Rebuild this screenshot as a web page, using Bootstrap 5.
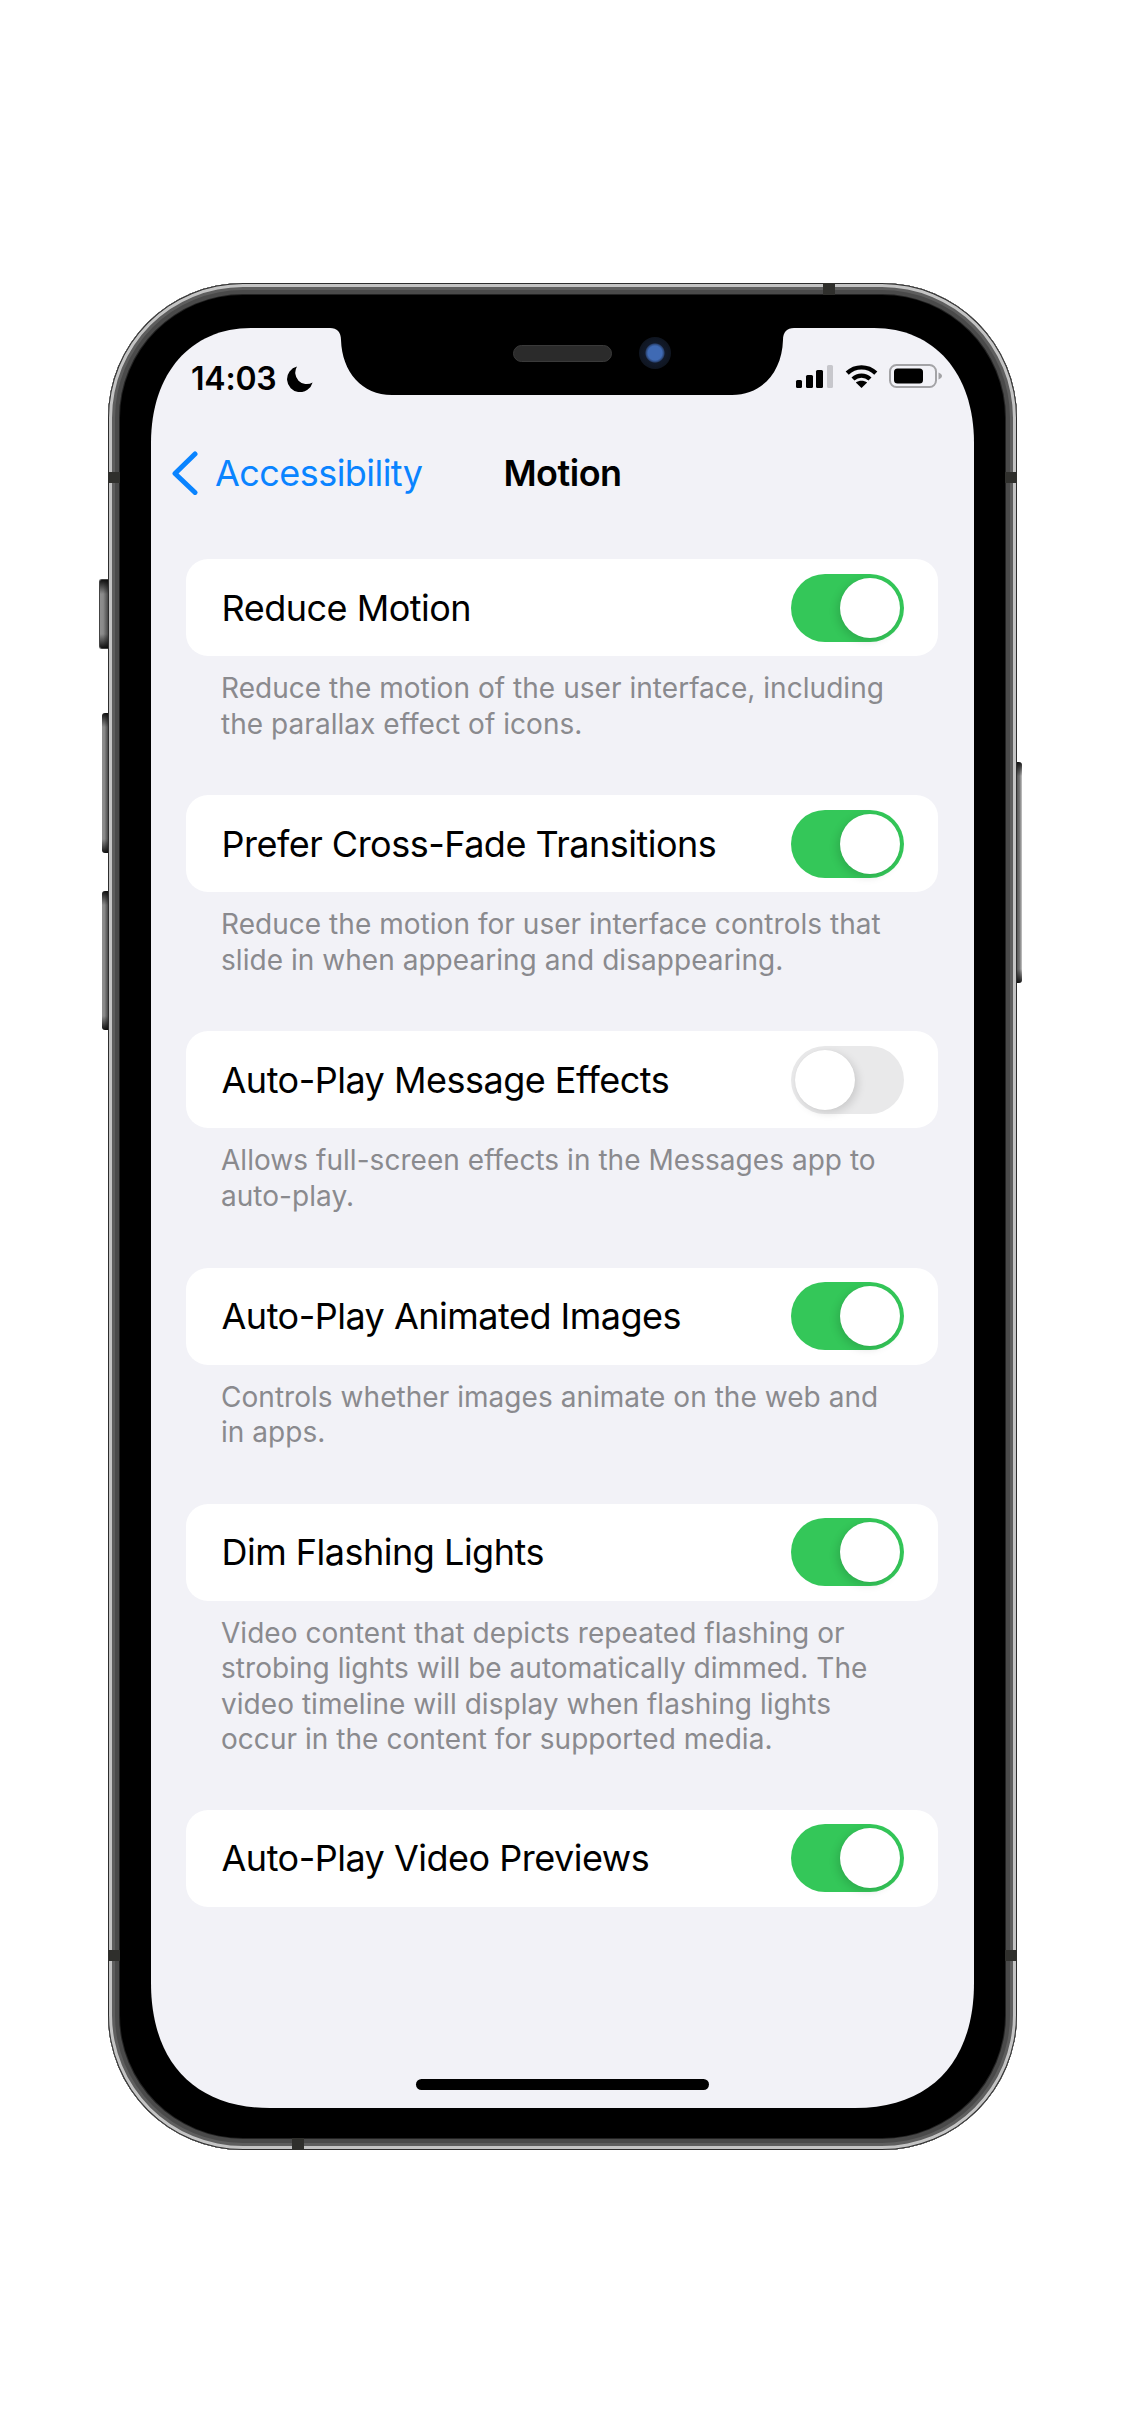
<!DOCTYPE html>
<html lang="en">
<head>
<meta charset="utf-8">
<title>Motion</title>
<link href="https://cdn.jsdelivr.net/npm/bootstrap@5.3.0/dist/css/bootstrap.min.css" rel="stylesheet">
<style>
html, body { background: #fff; }
body { width: 1125px; height: 2436px; padding: 283px 0 0 108px; font-family: Inter, "Liberation Sans", sans-serif; color: #000; overflow: hidden; }
.phone-body { width: 909px; height: 1867px; border-radius: 135px; background: #000; padding: 45px 43px 42px; box-shadow: inset 0 0 0 1px #2e2e2e, inset 0 0 0 4px #c4c4c4, inset 0 0 0 7px #5e5e5e, inset 0 0 0 11px #4a4a4a, inset 0 0 0 12px #222; }
.side-key { position: absolute; background: linear-gradient(180deg, rgba(10,10,10,.95), rgba(10,10,10,0) 14px, rgba(10,10,10,0) calc(100% - 14px), rgba(10,10,10,.95)), linear-gradient(90deg, #8f8f8f, #8a8a8a 40%, #4a4a4a); }
.key-silent { left: -9px; top: 296px; width: 9px; height: 70px; border-radius: 3px 0 0 3px; border: 1px solid #444; border-right: 0; }
.key-up { left: -6px; top: 430px; width: 6px; height: 140px; border-radius: 3px 0 0 3px; }
.key-down { left: -6px; top: 608px; width: 6px; height: 139px; border-radius: 3px 0 0 3px; }
.key-power { right: -5px; top: 479px; width: 5px; height: 221px; border-radius: 0 3px 3px 0; background: linear-gradient(180deg, rgba(10,10,10,.9), rgba(10,10,10,0) 14px, rgba(10,10,10,0) calc(100% - 14px), rgba(10,10,10,.9)), linear-gradient(270deg, #c9c9c9, #777 45%, #555); }
.band { position: absolute; background: #2f2f2c; }
.band-v { width: 12px; height: 11px; }
.band-h { width: 12px; height: 12px; }
.band-a { left: 0; top: 189px; } .band-b { right: 0; top: 189px; }
.band-c { left: 0; top: 1667px; } .band-d { right: 0; top: 1667px; }
.band-e { left: 715px; top: 0; } .band-f { left: 184px; bottom: 0; }
.screen-area { width: 823px; height: 1780px; background: #f2f2f7; overflow: hidden; clip-path: path("M0 115C0 45 40 0 100 0H723C783 0 823 45 823 115V1655C823 1730 783 1780 704 1780H119C40 1780 0 1730 0 1655Z"); }
.notch-shape { position: absolute; left: 179px; top: 0; width: 464px; height: 67px; }
.speaker-slot { position: absolute; left: 362px; top: 17px; width: 99px; height: 17px; border-radius: 9px; background: #2b2b2b; border: 1px solid #3a3a3a; }
.camera-lens { position: absolute; left: 488px; top: 9px; width: 32px; height: 32px; border-radius: 50%; background: radial-gradient(circle, #3f6ab4 0 7px, #2a4474 9px, #121a2a 10px, #0f1520 16px); }
.status-row { height: 100px; padding: 36px 32px 0 40px; }
.clock-text { font-size: 32px; font-weight: 600; line-height: 30px; letter-spacing: -.2px; }
.moon-icon { width: 26px; height: 26px; margin-left: 10px; }
.signal-bar { width: 6.5px; border-radius: 1.5px; background: #000; }
.bar-1 { height: 8px; } .bar-2 { height: 13px; } .bar-3 { height: 18px; } .bar-4 { height: 23px; background: #c7c7cc; }
.signal-set { gap: 3.7px; height: 23px; }
.wifi-icon { width: 33px; height: 24px; margin-left: 12px; }
.battery-icon { width: 53px; height: 24px; margin-left: 11px; }
.nav-row { height: 88px; padding-top: 23px; display: grid; grid-template-columns: 1fr auto 1fr; font-size: 36px; line-height: 44px; }
.back-group { padding-left: 21px; }
.back-chevron { width: 26px; height: 44px; margin-right: 17px; flex: none; }
.back-label { color: #0a84ff; letter-spacing: -.55px; }
.nav-title { font-weight: 600; letter-spacing: -.5px; }
.settings-list { padding: 43px 36px 0 35px; }
.setting-row { height: 97px; border-radius: 22px; background: #fff; padding: 0 34px 0 35.5px; font-size: 36px; letter-spacing: -.5px; }
.setting-note { margin: 15px 0 53.2px; padding: 0 20px 0 35px; font-size: 28px; line-height: 35.5px; color: #8a8a8e; letter-spacing: .04px; height: 71px; white-space: nowrap; }
.setting-note.note-long { height: 142px; margin-bottom: 52px; }
.toggle-track { width: 113px; height: 68px; padding: 4px; border-radius: 34px; background: #34c759; flex: none; }
.toggle-off { background: #e9e9ea; }
.toggle-thumb { width: 60px; height: 60px; border-radius: 50%; background: #fff; box-shadow: -3px 3px 9px rgba(0,0,0,.13), 0 0 1px rgba(0,0,0,.08); }
.toggle-off .toggle-thumb { box-shadow: 3px 3px 9px rgba(0,0,0,.13), 0 0 1px rgba(0,0,0,.08); }
.home-bar { position: absolute; left: 308px; top: 1796px; width: 293px; height: 11px; border-radius: 6px; background: #000; }
</style>
</head>
<body>
<div class="phone-body position-relative">
  <span class="side-key key-silent"></span>
  <span class="side-key key-up"></span>
  <span class="side-key key-down"></span>
  <span class="side-key key-power"></span>
  <span class="band band-v band-a"></span><span class="band band-v band-b"></span>
  <span class="band band-v band-c"></span><span class="band band-v band-d"></span>
  <span class="band band-h band-e"></span><span class="band band-h band-f"></span>
  <div class="screen-area position-relative">
    <svg class="notch-shape" viewBox="0 0 464 67"><path fill="#000" d="M0 0C7 0 11 4 11 12C12 44 32 67 62 67H402C432 67 452 44 453 12C453 4 457 0 464 0Z"/></svg>
    <span class="speaker-slot"></span>
    <span class="camera-lens"></span>
    <div class="status-row d-flex align-items-start justify-content-between">
      <div class="d-flex align-items-center">
        <span class="clock-text">14:03</span>
        <svg class="moon-icon" viewBox="0 0 26 26"><path d="M10 0.5A13 13 0 1 0 25.6 16.5A11.5 11.5 0 0 1 10 0.5Z"/></svg>
      </div>
      <div class="d-flex align-items-center">
        <div class="signal-set d-flex align-items-end">
          <span class="signal-bar bar-1"></span><span class="signal-bar bar-2"></span><span class="signal-bar bar-3"></span><span class="signal-bar bar-4"></span>
        </div>
        <svg class="wifi-icon" viewBox="0 0 33 24"><path fill="none" stroke="#000" stroke-width="4.4" d="M2.2 9.2C10.2 1.4 22.8 1.4 30.8 9.2"/><path fill="none" stroke="#000" stroke-width="4.4" d="M8 15C12.8 10.500 20.2 10.500 25 15"/><path d="M10.8 18.600C14 16 19 16 22.200 18.600L16.500 24Z"/></svg>
        <svg class="battery-icon" viewBox="0 0 53 24"><rect x="1" y="1" width="46" height="22" rx="6.500" fill="none" stroke="#a3a3a6" stroke-width="2"/><rect x="5" y="4.500" width="29" height="15" rx="3.500"/><path fill="#a3a3a6" d="M49.500 8.500C51.500 9.200 53 10.500 53 12S51.500 14.800 49.500 15.500Z"/></svg>
      </div>
    </div>
    <div class="nav-row align-items-start">
      <div class="back-group d-flex align-items-start">
        <svg class="back-chevron" viewBox="0 0 26 44"><path fill="none" stroke="#0a84ff" stroke-width="5" stroke-linecap="round" stroke-linejoin="round" d="M23 3L3 22.500L23 41.500"/></svg>
        <span class="back-label">Accessibility</span>
      </div>
      <span class="nav-title">Motion</span>
      <span></span>
    </div>
    <div class="settings-list">
      <div class="setting-row d-flex align-items-center justify-content-between"><span>Reduce Motion</span><div class="toggle-track d-flex justify-content-end"><div class="toggle-thumb"></div></div></div>
      <p class="setting-note">Reduce the motion of the user interface, including<br>the parallax effect of icons.</p>
      <div class="setting-row d-flex align-items-center justify-content-between"><span>Prefer Cross-Fade Transitions</span><div class="toggle-track d-flex justify-content-end"><div class="toggle-thumb"></div></div></div>
      <p class="setting-note">Reduce the motion for user interface controls that<br>slide in when appearing and disappearing.</p>
      <div class="setting-row d-flex align-items-center justify-content-between"><span>Auto-Play Message Effects</span><div class="toggle-track toggle-off d-flex justify-content-start"><div class="toggle-thumb"></div></div></div>
      <p class="setting-note">Allows full-screen effects in the Messages app to<br>auto-play.</p>
      <div class="setting-row d-flex align-items-center justify-content-between"><span>Auto-Play Animated Images</span><div class="toggle-track d-flex justify-content-end"><div class="toggle-thumb"></div></div></div>
      <p class="setting-note">Controls whether images animate on the web and<br>in apps.</p>
      <div class="setting-row d-flex align-items-center justify-content-between"><span>Dim Flashing Lights</span><div class="toggle-track d-flex justify-content-end"><div class="toggle-thumb"></div></div></div>
      <p class="setting-note note-long">Video content that depicts repeated flashing or<br>strobing lights will be automatically dimmed. The<br>video timeline will display when flashing lights<br>occur in the content for supported media.</p>
      <div class="setting-row d-flex align-items-center justify-content-between"><span>Auto-Play Video Previews</span><div class="toggle-track d-flex justify-content-end"><div class="toggle-thumb"></div></div></div>
    </div>
  </div>
  <span class="home-bar"></span>
</div>
<script src="https://cdn.jsdelivr.net/npm/bootstrap@5.3.0/dist/js/bootstrap.bundle.min.js"></script>
</body>
</html>
